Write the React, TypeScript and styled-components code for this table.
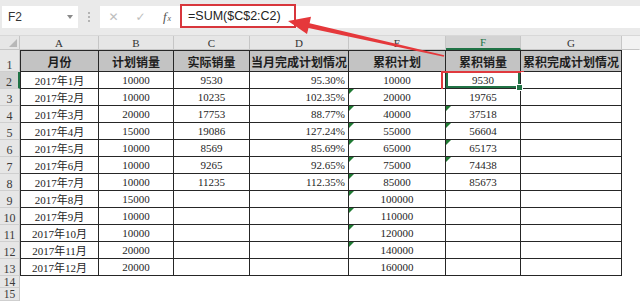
import React from "react"
import styled, { createGlobalStyle } from "styled-components"

const GlobalStyle = createGlobalStyle`
    body {
        margin: 0;
        background: #ffffff;
        overflow: hidden;
    }
`

const Page = styled.div`
    position: relative;
    width: 640px;
    height: 302px;
    overflow: hidden;
    background: #ffffff;
`

const Toolbar = styled.div`
    height: 36px;
    box-sizing: border-box;
    background: #eaeaea;
    border-bottom: 1px solid #d8d8d8;
    display: flex;
    align-items: center;
    padding: 0 0 2px 2px;
`

const NameBox = styled.div`
    width: 76px;
    height: 22px;
    box-sizing: border-box;
    background: #ffffff;
    display: flex;
    align-items: center;
    justify-content: space-between;
    padding: 0 5px 0 6px;
    font-family: "Liberation Sans", Arial, sans-serif;
    font-size: 12px;
    color: #333;
`

const DropArrow = styled.span`
    width: 0;
    height: 0;
    border-left: 3px solid transparent;
    border-right: 3px solid transparent;
    border-top: 4px solid #8a8a8a;
`

const Grip = styled.div`
    width: 22px;
    display: flex;
    flex-direction: column;
    align-items: center;
    gap: 2px;

    span {
        width: 2px;
        height: 2px;
        background: #b4b4b4;
    }
`

const FormulaArea = styled.div`
    flex: 1;
    height: 22px;
    background: #ffffff;
    display: flex;
    align-items: center;
`

const ToolIcon = styled.span<{ $width: number }>`
    width: ${p => p.$width}px;
    display: flex;
    justify-content: center;
    color: #bdbdbd;
    font-family: "DejaVu Sans", sans-serif;
    font-size: 12px;
`

const FxIcon = styled.span`
    width: 26px;
    display: flex;
    justify-content: center;
    font-family: "Liberation Serif", serif;
    font-style: italic;
    font-size: 13px;
    color: #555;

    sub {
        font-size: 8px;
        margin-top: 5px;
        margin-left: 1px;
    }
`

const FormulaText = styled.span`
    height: 24px;
    box-sizing: border-box;
    margin-top: -2px;
    border: 2px solid #d8363c;
    display: flex;
    align-items: center;
    padding: 0 13px 0 6px;
    font-family: "Liberation Sans", Arial, sans-serif;
    font-size: 12.5px;
    color: #222;
`

const Sheet = styled.div`
    display: grid;
    grid-template-columns: 20px 79px 75px 76px 99px 97px 75px 101px 18px;
    grid-template-rows: 14px 22px repeat(12, 17px) 12px 13px;
`

const Corner = styled.div`
    position: relative;
    background: #e6e6e6;
    border-right: 1px solid #c6c6c6;
    border-bottom: 1px solid #c6c6c6;

    &::after {
        content: "";
        position: absolute;
        right: 2px;
        bottom: 2px;
        border-left: 8px solid transparent;
        border-bottom: 8px solid #b8b8b8;
    }
`

const ColHead = styled.div<{ $active?: boolean; $blank?: boolean }>`
    box-sizing: border-box;
    background: ${p => (p.$blank ? "#f2f2f2" : p.$active ? "#d3d3d3" : "#e6e6e6")};
    border-right: 1px solid ${p => (p.$blank ? "transparent" : "#c6c6c6")};
    border-bottom: ${p => (p.$active ? "2px solid #217346" : "1px solid #c6c6c6")};
    display: flex;
    align-items: center;
    justify-content: center;
    font-family: "Liberation Serif", serif;
    font-size: 11px;
    color: ${p => (p.$active ? "#217346" : "#333")};
`

const RowHead = styled.div<{ $active?: boolean; $small?: boolean }>`
    box-sizing: border-box;
    background: ${p => (p.$active ? "#d3d3d3" : "#e6e6e6")};
    border-bottom: 1px solid #cfcfcf;
    border-right: ${p => (p.$active ? "2px solid #217346" : "1px solid #c6c6c6")};
    display: flex;
    align-items: ${p => (p.$small ? "center" : "flex-end")};
    justify-content: center;
    font-family: "Liberation Serif", serif;
    font-size: ${p => (p.$small ? "11.5px" : "12px")};
    line-height: ${p => (p.$small ? "10px" : "11px")};
    color: #3a3a3a;
`

const Cell = styled.div<{ $align?: "center" | "right"; $title?: boolean; $first?: boolean; $flag?: boolean }>`
    position: relative;
    box-sizing: border-box;
    white-space: nowrap;
    background: ${p => (p.$title ? "#c3c3c3" : "#ffffff")};
    border-right: 1px solid #262626;
    border-bottom: 1px solid #262626;
    border-top: ${p => (p.$title ? "1px solid #262626" : "none")};
    border-left: ${p => (p.$first ? "1px solid #262626" : "none")};
    display: flex;
    align-items: center;
    justify-content: ${p => (p.$align === "right" ? "flex-end" : "center")};
    padding: 0 ${p => (p.$align === "right" ? "3px" : "0")} 0 0;
    font-family: ${p => (p.$title
        ? '"Noto Sans CJK SC", sans-serif'
        : '"Liberation Serif", "Noto Sans CJK SC", serif')};
    font-weight: ${p => (p.$title ? 700 : 400)};
    font-size: ${p => (p.$title ? "12px" : "11px")};
    color: #1e1e1e;

    ${p => p.$flag && `
        &::before {
            content: "";
            position: absolute;
            left: 0;
            top: 0;
            border-top: 5px solid #1f7a33;
            border-right: 5px solid transparent;
        }
    `}
`

const Selected = styled(Cell)`
    box-shadow: inset 2px 0 0 #217346, inset -2px 0 0 #217346, inset 0 -2px 0 #217346, inset 0 1px 0 #217346;

    &::after {
        content: "";
        position: absolute;
        inset: -1px -4px -3px -5px;
        border: 2px solid #e0393e;
    }
`

const Handle = styled.span`
    position: absolute;
    right: -3px;
    bottom: -3px;
    width: 5px;
    height: 5px;
    background: #217346;
    border: 1px solid #ffffff;
    z-index: 2;
`

const Blank = styled.div<{ $span?: number }>`
    grid-column: span ${p => p.$span ?? 1};
`

const ArrowLayer = styled.svg`
    position: absolute;
    left: 0;
    top: 0;
    pointer-events: none;
`

const columns = ["A", "B", "C", "D", "E", "F", "G"]
const titles = ["月份", "计划销量", "实际销量", "当月完成计划情况", "累积计划", "累积销量", "累积完成计划情况"]
const plan = [10000, 10000, 20000, 15000, 10000, 10000, 10000, 15000, 10000, 10000, 20000, 20000]
const actual = [9530, 10235, 17753, 19086, 8569, 9265, 11235]
const pct = ["95.30%", "102.35%", "88.77%", "127.24%", "85.69%", "92.65%", "112.35%"]
const cumPlan = [10000, 20000, 40000, 55000, 65000, 75000, 85000, 100000, 110000, 120000, 140000, 160000]
const cumSales = [9530, 19765, 37518, 56604, 65173, 74438, 85673]

const App: React.FC = () => {
    return <Page>
        <GlobalStyle />
        <Toolbar>
            <NameBox>F2<DropArrow /></NameBox>
            <Grip><span /><span /><span /></Grip>
            <FormulaArea>
                <ToolIcon $width={27}>✕</ToolIcon>
                <ToolIcon $width={27}>✓</ToolIcon>
                <FxIcon>f<sub>x</sub></FxIcon>
                <FormulaText>=SUM($C$2:C2)</FormulaText>
            </FormulaArea>
        </Toolbar>

        <Sheet>
            <Corner />
            {columns.map(c => <ColHead key={c} $active={c === "F"}>{c}</ColHead>)}
            <ColHead $blank />

            <RowHead>1</RowHead>
            {titles.map((t, i) => <Cell key={t} $title $first={i === 0}>{t}</Cell>)}
            <Blank />

            {plan.map((p, i) => (
                <React.Fragment key={i}>
                    <RowHead $active={i === 0}>{i + 2}</RowHead>
                    <Cell $first>2017年{i + 1}月</Cell>
                    <Cell>{p}</Cell>
                    <Cell>{actual[i] ?? ""}</Cell>
                    <Cell $align="right">{pct[i] ?? ""}</Cell>
                    <Cell $flag={i >= 1 && i <= 10}>{cumPlan[i]}</Cell>
                    {i === 0
                        ? <Selected>{cumSales[i]}<Handle /></Selected>
                        : <Cell $flag={i >= 2 && i <= 5}>{cumSales[i] ?? ""}</Cell>}
                    <Cell />
                    <Blank />
                </React.Fragment>
            ))}

            <RowHead $small>14</RowHead>
            <Blank $span={8} />
            <RowHead $small>15</RowHead>
            <Blank $span={8} />
        </Sheet>

        {/* red callout arrow from F2 to the formula */}
        <ArrowLayer width={640} height={302} viewBox="0 0 640 302">
            <polygon
                fill="#e5383b"
                points="288,21 311,16.8 309.6,23.2 444.2,55.3 443.8,56.7 308.5,28.1 307,34"
            />
        </ArrowLayer>
    </Page>
}

export default App
